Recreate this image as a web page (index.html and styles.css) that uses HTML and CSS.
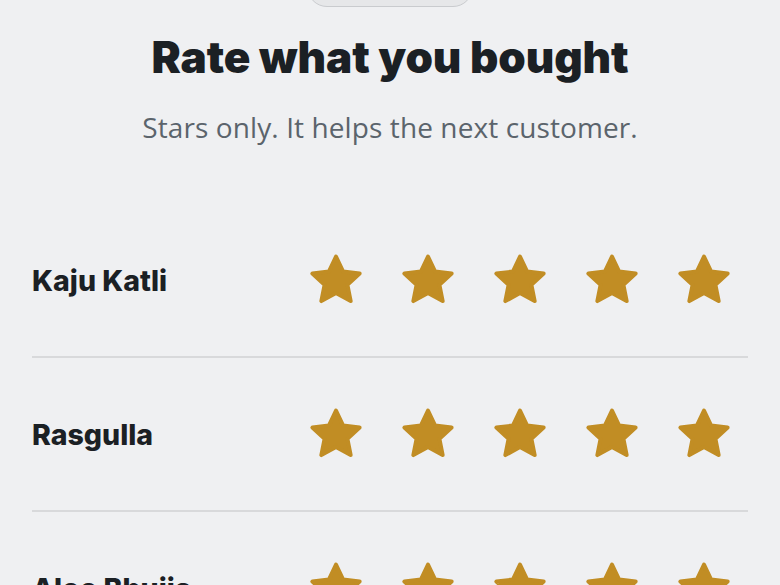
FILE: index.html
```html
<!DOCTYPE html>
<html>
<head>
<meta charset="utf-8">
<link rel="stylesheet" href="styles.css">
</head>
<body>
<svg width="0" height="0" class="defs">
  <defs>
    <symbol id="star" viewBox="0 0 24 24">
      <path d="M12 2.6l2.85 6.02 6.6.78-4.88 4.52 1.3 6.52L12 17.2l-5.87 3.24 1.3-6.52-4.88-4.52 6.6-.78z" fill="currentColor" stroke="currentColor" stroke-width="1.6" stroke-linejoin="round"/>
    </symbol>
  </defs>
</svg>
<div class="page">
  <div class="handle"></div>
  <h1 class="title">Rate what you bought</h1>
  <p class="subtitle">Stars only. It helps the next customer.</p>
  <div class="list">
    <div class="row">
      <div class="name">Kaju Katli</div>
      <div class="stars">
        <svg class="star"><use href="#star"/></svg>
        <svg class="star"><use href="#star"/></svg>
        <svg class="star"><use href="#star"/></svg>
        <svg class="star"><use href="#star"/></svg>
        <svg class="star"><use href="#star"/></svg>
      </div>
    </div>
    <div class="row">
      <div class="name">Rasgulla</div>
      <div class="stars">
        <svg class="star"><use href="#star"/></svg>
        <svg class="star"><use href="#star"/></svg>
        <svg class="star"><use href="#star"/></svg>
        <svg class="star"><use href="#star"/></svg>
        <svg class="star"><use href="#star"/></svg>
      </div>
    </div>
    <div class="row">
      <div class="name">Aloo Bhujia</div>
      <div class="stars">
        <svg class="star"><use href="#star"/></svg>
        <svg class="star"><use href="#star"/></svg>
        <svg class="star"><use href="#star"/></svg>
        <svg class="star"><use href="#star"/></svg>
        <svg class="star"><use href="#star"/></svg>
      </div>
    </div>
  </div>
</div>
</body>
</html>
```

FILE: styles.css
```css
html, body {
  margin: 0;
  padding: 0;
  background: #eff0f2;
  height: 100%;
  overflow: hidden;
}
.defs {
  position: absolute;
  width: 0;
  height: 0;
}
.page {
  padding: 0 32px;
  display: flex;
  flex-direction: column;
  align-items: center;
}
.handle {
  width: 166px;
  height: 40px;
  margin-top: -33px;
  border: 1.5px solid #c9cbce;
  border-radius: 20px;
  background: #e6e7e9;
  box-sizing: border-box;
  flex-shrink: 0;
}
.title {
  margin: 26px 0 0;
  font-family: "Inter", "Liberation Sans", sans-serif;
  font-weight: 900;
  font-size: 44px;
  line-height: 48px;
  color: #1b2024;
  letter-spacing: -0.1px;
}
.subtitle {
  margin: 28px 0 0;
  font-family: "Open Sans", "Noto Sans", sans-serif;
  font-size: 28px;
  line-height: 36px;
  color: #5b646c;
  letter-spacing: 0.1px;
}
.list {
  align-self: stretch;
  margin-top: 59px;
}
.row {
  height: 152px;
  display: flex;
  align-items: center;
  justify-content: space-between;
  border-bottom: 2px solid #d8d9db;
}
.name {
  font-family: "Inter", "Liberation Sans", sans-serif;
  font-weight: 800;
  font-size: 28.5px;
  color: #1b2024;
}
.stars {
  display: flex;
  gap: 32px;
  margin-right: 14px;
}
.star {
  width: 60px;
  height: 60px;
  color: #c18d24;
}
```
